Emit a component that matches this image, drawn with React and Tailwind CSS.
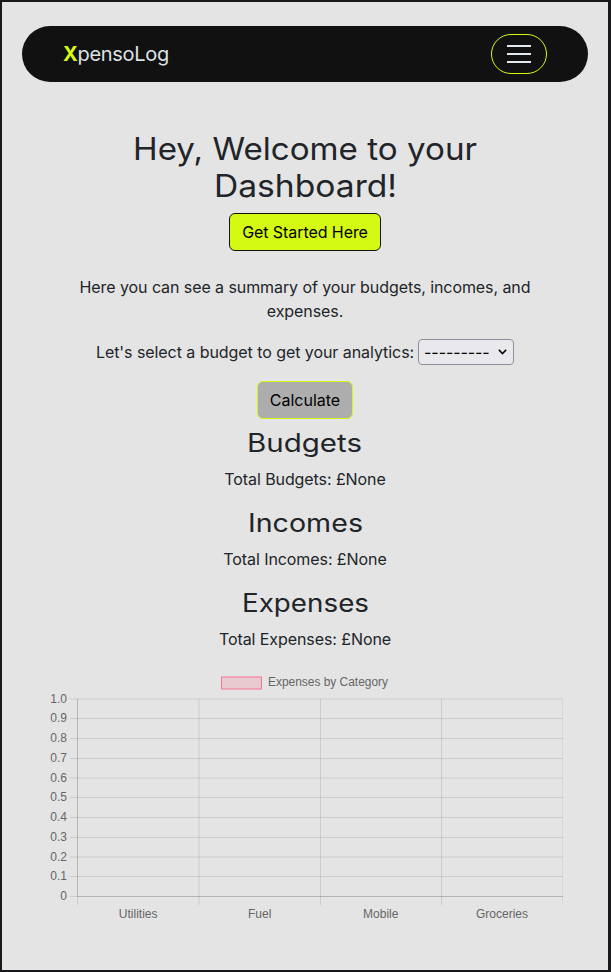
const ROWS = [
  ["1.0", 699], ["0.9", 718.5], ["0.8", 738.5], ["0.7", 758.5], ["0.6", 778], ["0.5", 797.5],
  ["0.4", 817.5], ["0.3", 837.5], ["0.2", 857], ["0.1", 876.5], ["0", 896.5],
];
const COLS = [77.5, 199, 320.5, 441.5];
const LABELS = [["Utilities", 138.2], ["Fuel", 259.7], ["Mobile", 380.8], ["Groceries", 502]];

function Heading({ children, width }) {
  return (
    <svg className="block h-8" width={width} height="32" role="heading" aria-level="2">
      <text x="0" y="25" textLength={width} lengthAdjust="spacingAndGlyphs" className="fill-[#212529] text-[25px]">
        {children}
      </text>
    </svg>
  );
}

function Section({ title, total, width }) {
  return (
    <section className="flex h-20 flex-col items-center">
      <Heading width={width}>{title}</Heading>
      <p className="mt-2 leading-6 tracking-[-0.08px]">{total}</p>
    </section>
  );
}

function Chart() {
  return (
    <svg className="block h-[270px] w-[530px] tracking-normal" viewBox="40 667 530 270" fontFamily="'Liberation Sans', Arial, sans-serif" fontSize="12" fill="#666">
      <rect x="221.5" y="677" width="40" height="12" fill="#ff6384" fillOpacity="0.2" stroke="#ff6384" strokeOpacity="0.85" />
      <text x="268" y="686" textLength="120" lengthAdjust="spacingAndGlyphs">Expenses by Category</text>
      {ROWS.map(([label, y]) => (
        <g key={label}>
          <path d={`M70 ${y}H563`} stroke="#000" strokeOpacity="0.1" />
          <text x="67" y={Math.floor(y) + 4} textAnchor="end">{label}</text>
        </g>
      ))}
      {COLS.map((x) => (
        <path key={x} d={`M${x} 699V905`} stroke="#000" strokeOpacity="0.1" />
      ))}
      <path d="M562.5 699V905" stroke="#000" strokeOpacity="0.05" />
      <path d="M77.5 699V896M77 896.5H563" stroke="#000" strokeOpacity="0.11" />
      {LABELS.map(([label, x]) => (
        <text key={label} x={x} y="918" textAnchor="middle">{label}</text>
      ))}
    </svg>
  );
}

export default function App() {
  return (
    <div className="h-[972px] w-[611px] border-y-2 border-l-2 border-r-[3px] border-[#18171a] bg-[#e4e4e4] font-['Inter',sans-serif] text-base text-[#212529]">
      <nav className="mx-5 mt-6 flex h-14 items-center justify-between rounded-full bg-[#111] pr-[41px] pl-[41px]">
        <a className="text-xl leading-[30px] tracking-[-0.3px] text-[#dee2e6]"><b className="font-bold text-[#d4fa14]">X</b>pensoLog</a>
        <button aria-label="Menu" className="flex h-10 w-14 flex-col items-center justify-center gap-1.5 rounded-[20px] border border-[#d4fa14]">
          <span className="h-0.5 w-6 bg-[#e4e9ed]" />
          <span className="h-0.5 w-6 bg-[#e4e9ed]" />
          <span className="h-0.5 w-6 bg-[#e4e9ed]" />
        </button>
      </nav>
      <main className="flex flex-col items-center pt-[49px]">
        <svg className="block h-[74px] w-[346px]" role="heading" aria-level="1" fill="#212529" fontSize="31">
          <text x="1" y="29" textLength="344" lengthAdjust="spacingAndGlyphs">Hey, Welcome to your</text>
          <text x="82" y="66" textLength="183" lengthAdjust="spacingAndGlyphs">Dashboard!</text>
        </svg>
        <button className="mt-2 h-[38px] w-[152px] rounded-md border border-[#111] bg-[#d4fa14] tracking-[-0.07px] text-black">Get Started Here</button>
        <p className="mt-6 w-[486px] text-center leading-6 tracking-[-0.08px]">Here you can see a summary of your budgets, incomes, and expenses.</p>
        <label className="mt-4 flex h-[26px] items-center gap-1">
          <span className="tracking-[-0.06px]">Let's select a budget to get your analytics:</span>
          <span className="flex h-[26px] w-24 items-center justify-between rounded border border-[#8f8f9d] bg-[#e9e9ed] pr-1.5 pl-[5px] text-black">
            <span className="leading-6 tracking-[-0.08px]">---------</span>
            <svg width="9" height="6" viewBox="0 0 9 6" fill="none" stroke="#000" strokeWidth="1.6"><path d="M.8.8 4.5 4.5 8.2.8" /></svg>
          </span>
        </label>
        <button className="mt-4 mb-2 h-[38px] w-24 rounded-md border border-[#d4fa14] bg-[#adadad] text-black">Calculate</button>
        <Section title="Budgets" total="Total Budgets: £None" width={115} />
        <Section title="Incomes" total="Total Incomes: £None" width={115} />
        <Section title="Expenses" total="Total Expenses: £None" width={127} />
        <Chart />
      </main>
    </div>
  );
}
